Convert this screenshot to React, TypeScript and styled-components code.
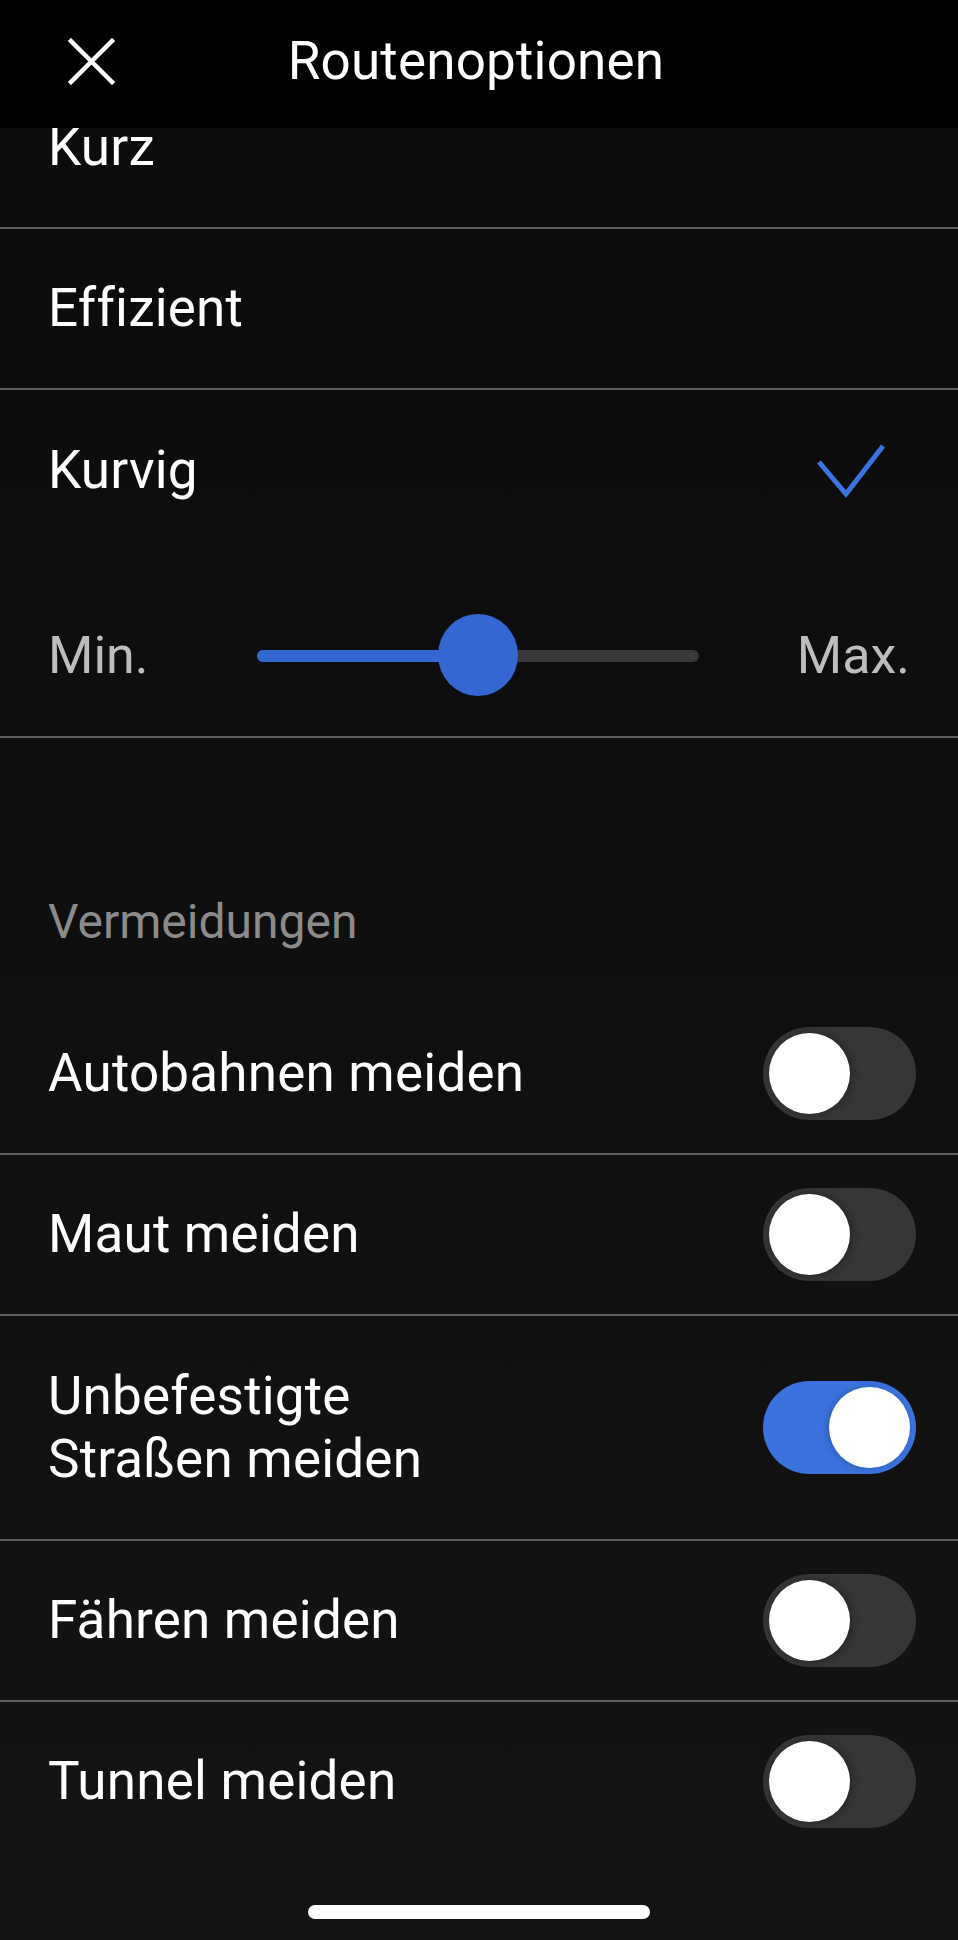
import styled, { createGlobalStyle } from "styled-components";

const GlobalStyle = createGlobalStyle`
    * {
        box-sizing: border-box;
    }

    body {
        margin: 0;
        background-color: #111;
        font-family: Roboto, "Liberation Sans", sans-serif;
        -webkit-font-smoothing: antialiased;
    }
`;

const avoidances = [
    { label: "Autobahnen meiden", on: false },
    { label: "Maut meiden", on: false },
    { label: "Unbefestigte Straßen meiden", on: true, tall: true },
    { label: "Fähren meiden", on: false },
    { label: "Tunnel meiden", on: false, last: true },
];

export default function App() {
    const curviness = 0.5;

    return (
        <Page>
            <GlobalStyle />
            <Header>
                <CloseButton aria-label="Schließen">
                    <svg width="47" height="47" viewBox="0 0 47 47">
                        <path d="M3 3 L44 44 M44 3 L3 44" stroke="#fff" strokeWidth="4.5" strokeLinecap="square" />
                    </svg>
                </CloseButton>
                <Title>Routenoptionen</Title>
                <div />
            </Header>

            <Content>
                <OptionRow $first>
                    <Label>Kurz</Label>
                </OptionRow>
                <OptionRow>
                    <Label>Effizient</Label>
                </OptionRow>

                <CurvyBlock>
                    <OptionRow $plain>
                        <Label>Kurvig</Label>
                        <Check width="70" height="56" viewBox="0 0 70 56">
                            <polyline points="3,20 30,52 67,4" fill="none" stroke="#3b74e0" strokeWidth="5" />
                        </Check>
                    </OptionRow>
                    <SliderRow>
                        <SliderLabel>Min.</SliderLabel>
                        <Track>
                            <Fill style={{ width: `${curviness * 100}%` }} />
                            <Thumb style={{ left: `${curviness * 100}%` }} />
                        </Track>
                        <SliderLabel $end>Max.</SliderLabel>
                    </SliderRow>
                </CurvyBlock>

                <SectionHeader>Vermeidungen</SectionHeader>

                {avoidances.map((item) => (
                    <OptionRow key={item.label} $tall={item.tall} $last={item.last}>
                        <Label $wrap>{item.label}</Label>
                        <Toggle $on={item.on}>
                            <Knob $on={item.on} />
                        </Toggle>
                    </OptionRow>
                ))}

                <Spacer />
                <HomeIndicator />
            </Content>
        </Page>
    );
}

const Page = styled.div`
    width: 958px;
    min-height: 1940px;
    display: flex;
    flex-direction: column;
    background: linear-gradient(#0b0b0b, #0f0f0f 50%, #141414);
    overflow: hidden;
`;

const Header = styled.header`
    height: 128px;
    flex-shrink: 0;
    background-color: #000;
    display: grid;
    grid-template-columns: 1fr auto 1fr;
    align-items: center;
    padding: 0 0 6px 68px;
    position: relative;
    z-index: 2;
`;

const CloseButton = styled.div`
    width: 47px;
    height: 47px;
    display: flex;

    svg{
        display: block;
    }
`;

const Title = styled.h1`
    margin: 0;
    font-size: 53px;
    font-weight: 400;
    color: #fff;
    line-height: 1;
    letter-spacing: 0.2px;
    transform: translateX(-37px);
`;

const Content = styled.main`
    flex: 1;
    display: flex;
    flex-direction: column;
    position: relative;
    z-index: 1;
`;

const OptionRow = styled.div<{ $first?: boolean; $plain?: boolean; $tall?: boolean; $last?: boolean }>`
    min-height: ${(p) => (p.$tall ? 225 : 161)}px;
    margin-top: ${(p) => (p.$first ? -60 : 0)}px;
    display: flex;
    align-items: center;
    justify-content: space-between;
    padding: 0 42px 0 48px;
    border-bottom: 2px solid ${(p) => (p.$plain || p.$last ? "transparent" : "#5d5d5d")};
    ${(p) => p.$plain && "border-bottom: none; min-height: 160px;"}
`;

const Label = styled.span<{ $wrap?: boolean }>`
    font-size: 53px;
    font-weight: 400;
    color: #fff;
    line-height: 63px;
    letter-spacing: 0.2px;
    max-width: ${(p) => (p.$wrap ? "490px" : "none")};
`;

const Check = styled.svg`
    margin-right: 30px;
    display: block;
`;

const CurvyBlock = styled.div`
    display: flex;
    flex-direction: column;
    border-bottom: 2px solid #5d5d5d;
`;

const SliderRow = styled.div`
    display: grid;
    grid-template-columns: 209px 442px 1fr;
    align-items: center;
    height: 186px;
    padding: 66px 48px 40px 48px;
`;

const SliderLabel = styled.span<{ $end?: boolean }>`
    font-size: 52px;
    color: #bdbdbd;
    line-height: 1;
    justify-self: ${(p) => (p.$end ? "end" : "start")};
`;

const Track = styled.div`
    position: relative;
    height: 12px;
    border-radius: 6px;
    background-color: #39393c;
`;

const Fill = styled.div`
    height: 100%;
    border-radius: 6px;
    background-color: #3467d1;
`;

const Thumb = styled.div`
    position: absolute;
    top: 50%;
    width: 80px;
    height: 82px;
    margin-left: -40px;
    margin-top: -42px;
    border-radius: 50%;
    background-color: #3467d1;
`;

const SectionHeader = styled.div`
    height: 256px;
    padding: 154px 48px 0;
    font-size: 48px;
    line-height: 60px;
    color: #8b8b8b;
`;

const Toggle = styled.div<{ $on: boolean }>`
    width: 153px;
    height: 93px;
    flex-shrink: 0;
    border-radius: 47px;
    background-color: ${(p) => (p.$on ? "#3b72de" : "#363639")};
    display: flex;
    align-items: center;
    padding: 0 6px;
    justify-content: ${(p) => (p.$on ? "flex-end" : "flex-start")};
`;

const Knob = styled.div<{ $on: boolean }>`
    width: 81px;
    height: 81px;
    border-radius: 50%;
    background-color: #fff;
    box-shadow: ${(p) => (p.$on ? "-2px 0 6px rgba(0, 0, 0, 0.2)" : "2px 0 8px rgba(0, 0, 0, 0.35)")};
`;

const Spacer = styled.div`
    flex: 1;
`;

const HomeIndicator = styled.div`
    width: 342px;
    height: 14px;
    border-radius: 7px;
    background-color: #fff;
    align-self: center;
    margin-bottom: 21px;
`;
